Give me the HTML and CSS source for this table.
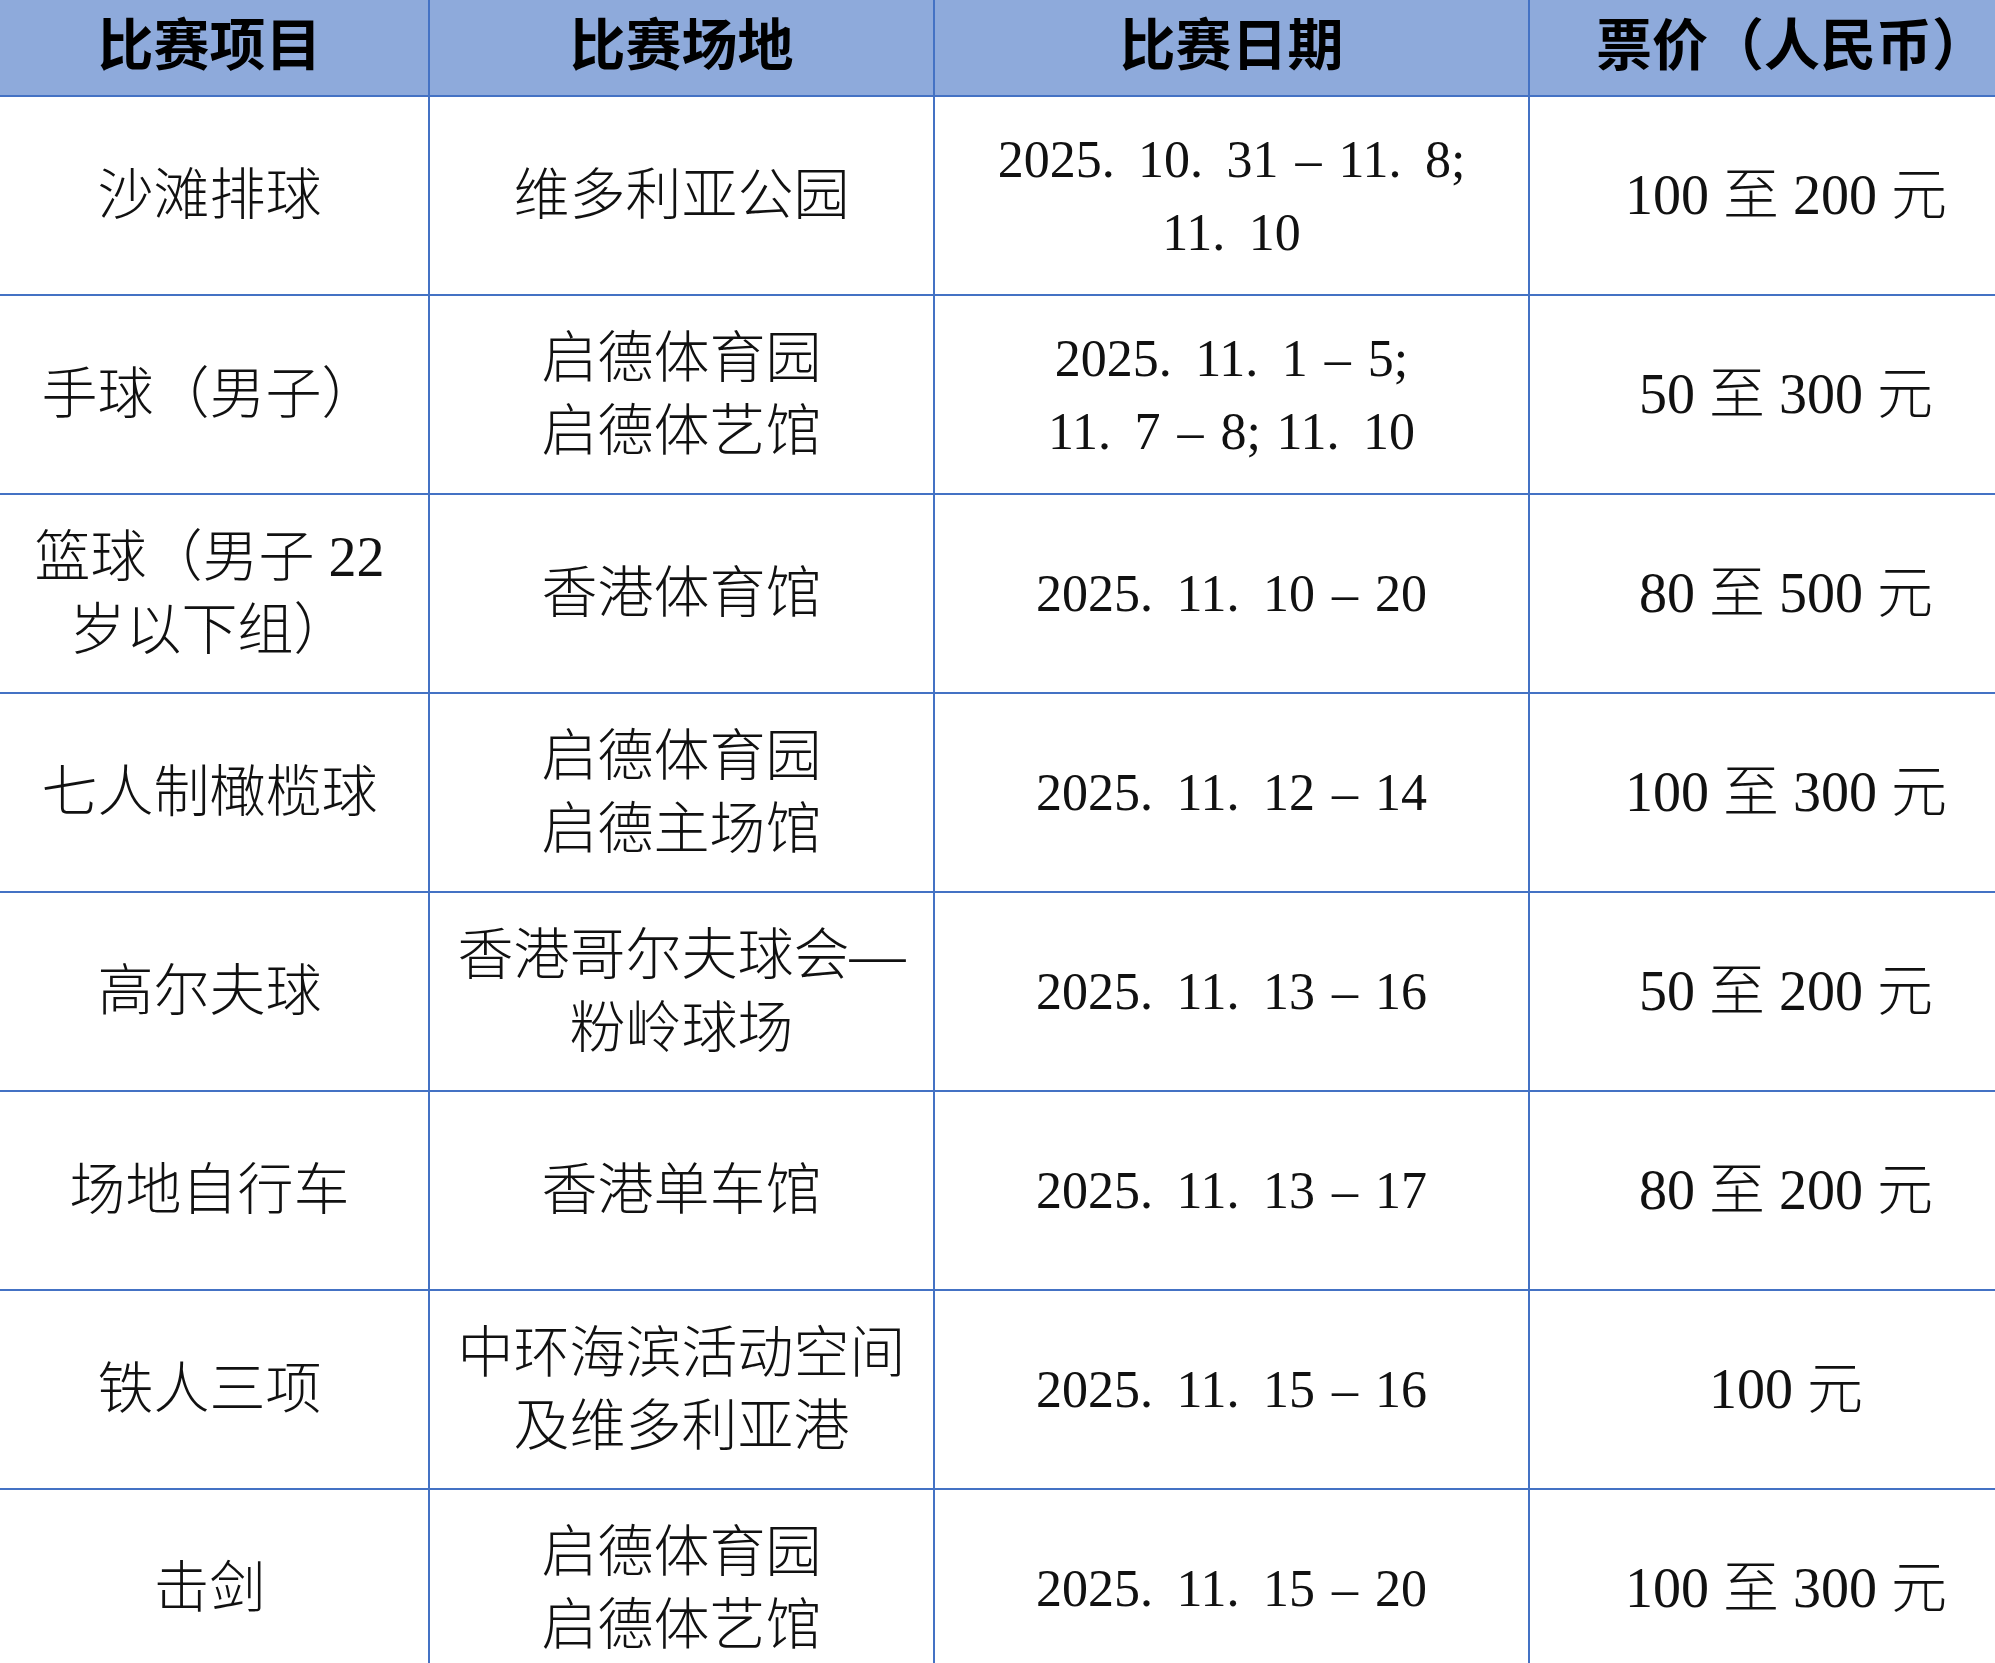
FILE: index.html
```html
<!DOCTYPE html>
<html lang="zh-CN">
<head>
<meta charset="utf-8">
<title>比赛票价</title>
<link rel="stylesheet" href="styles.css">
</head>
<body>
<div class="sheet">
  <div class="cell head">比赛项目</div>
  <div class="cell head">比赛场地</div>
  <div class="cell head">比赛日期</div>
  <div class="cell head price-head">票价（人民币）</div>

  <div class="cell">沙滩排球</div>
  <div class="cell">维多利亚公园</div>
  <div class="cell date"><span class="d">2025<span class="p">.</span>10<span class="p">.</span>31 – 11<span class="p">.</span>8;<br>11<span class="p">.</span>10</span></div>
  <div class="cell price">100 至 200 元</div>

  <div class="cell">手球（男子）</div>
  <div class="cell">启德体育园<br>启德体艺馆</div>
  <div class="cell date"><span class="d">2025<span class="p">.</span>11<span class="p">.</span>1 – 5;<br>11<span class="p">.</span>7 – 8<span class="sc">;</span>11<span class="p">.</span>10</span></div>
  <div class="cell price">50 至 300 元</div>

  <div class="cell">篮球（男子 22<br>岁以下组）</div>
  <div class="cell">香港体育馆</div>
  <div class="cell date"><span class="d">2025<span class="p">.</span>11<span class="p">.</span>10 – 20</span></div>
  <div class="cell price">80 至 500 元</div>

  <div class="cell">七人制橄榄球</div>
  <div class="cell">启德体育园<br>启德主场馆</div>
  <div class="cell date"><span class="d">2025<span class="p">.</span>11<span class="p">.</span>12 – 14</span></div>
  <div class="cell price">100 至 300 元</div>

  <div class="cell">高尔夫球</div>
  <div class="cell">香港哥尔夫球会—<br>粉岭球场</div>
  <div class="cell date"><span class="d">2025<span class="p">.</span>11<span class="p">.</span>13 – 16</span></div>
  <div class="cell price">50 至 200 元</div>

  <div class="cell">场地自行车</div>
  <div class="cell">香港单车馆</div>
  <div class="cell date"><span class="d">2025<span class="p">.</span>11<span class="p">.</span>13 – 17</span></div>
  <div class="cell price">80 至 200 元</div>

  <div class="cell">铁人三项</div>
  <div class="cell">中环海滨活动空间<br>及维多利亚港</div>
  <div class="cell date"><span class="d">2025<span class="p">.</span>11<span class="p">.</span>15 – 16</span></div>
  <div class="cell price">100 元</div>

  <div class="cell">击剑</div>
  <div class="cell">启德体育园<br>启德体艺馆</div>
  <div class="cell date"><span class="d">2025<span class="p">.</span>11<span class="p">.</span>15 – 20</span></div>
  <div class="cell price">100 至 300 元</div>
</div>
</body>
</html>
```

FILE: styles.css
```css
html, body {
  margin: 0;
  padding: 0;
  background: #ffffff;
}

body {
  overflow: hidden;
}

.sheet {
  display: grid;
  grid-template-columns: 439px 505px 595px 514px;
  grid-template-rows: 97px;
  grid-auto-rows: 199px;
  margin-left: -9px;
  width: 2053px;
  font-family: "Liberation Serif", "Noto Sans CJK SC", serif;
  font-size: 56px;
  font-weight: 300;
  color: #111111;
}

.cell {
  box-sizing: border-box;
  border-right: 2px solid #4472c4;
  border-bottom: 2px solid #4472c4;
  display: flex;
  align-items: center;
  justify-content: center;
  text-align: center;
  line-height: 73px;
  padding: 0 12px;
}

.head {
  background: #8eaadb;
  font-family: "Noto Sans CJK SC", sans-serif;
  font-weight: 700;
  color: #000000;
  line-height: 1.2;
  padding-bottom: 14px;
}

.price-head {
  padding-right: 0;
}

.date {
  font-size: 52px;
  word-spacing: 4px;
}

.d {
  display: block;
}

.p {
  margin-right: 0.45em;
}

.sc {
  margin-right: 0.3em;
}

.price {
  padding-left: 12px;
}
```
